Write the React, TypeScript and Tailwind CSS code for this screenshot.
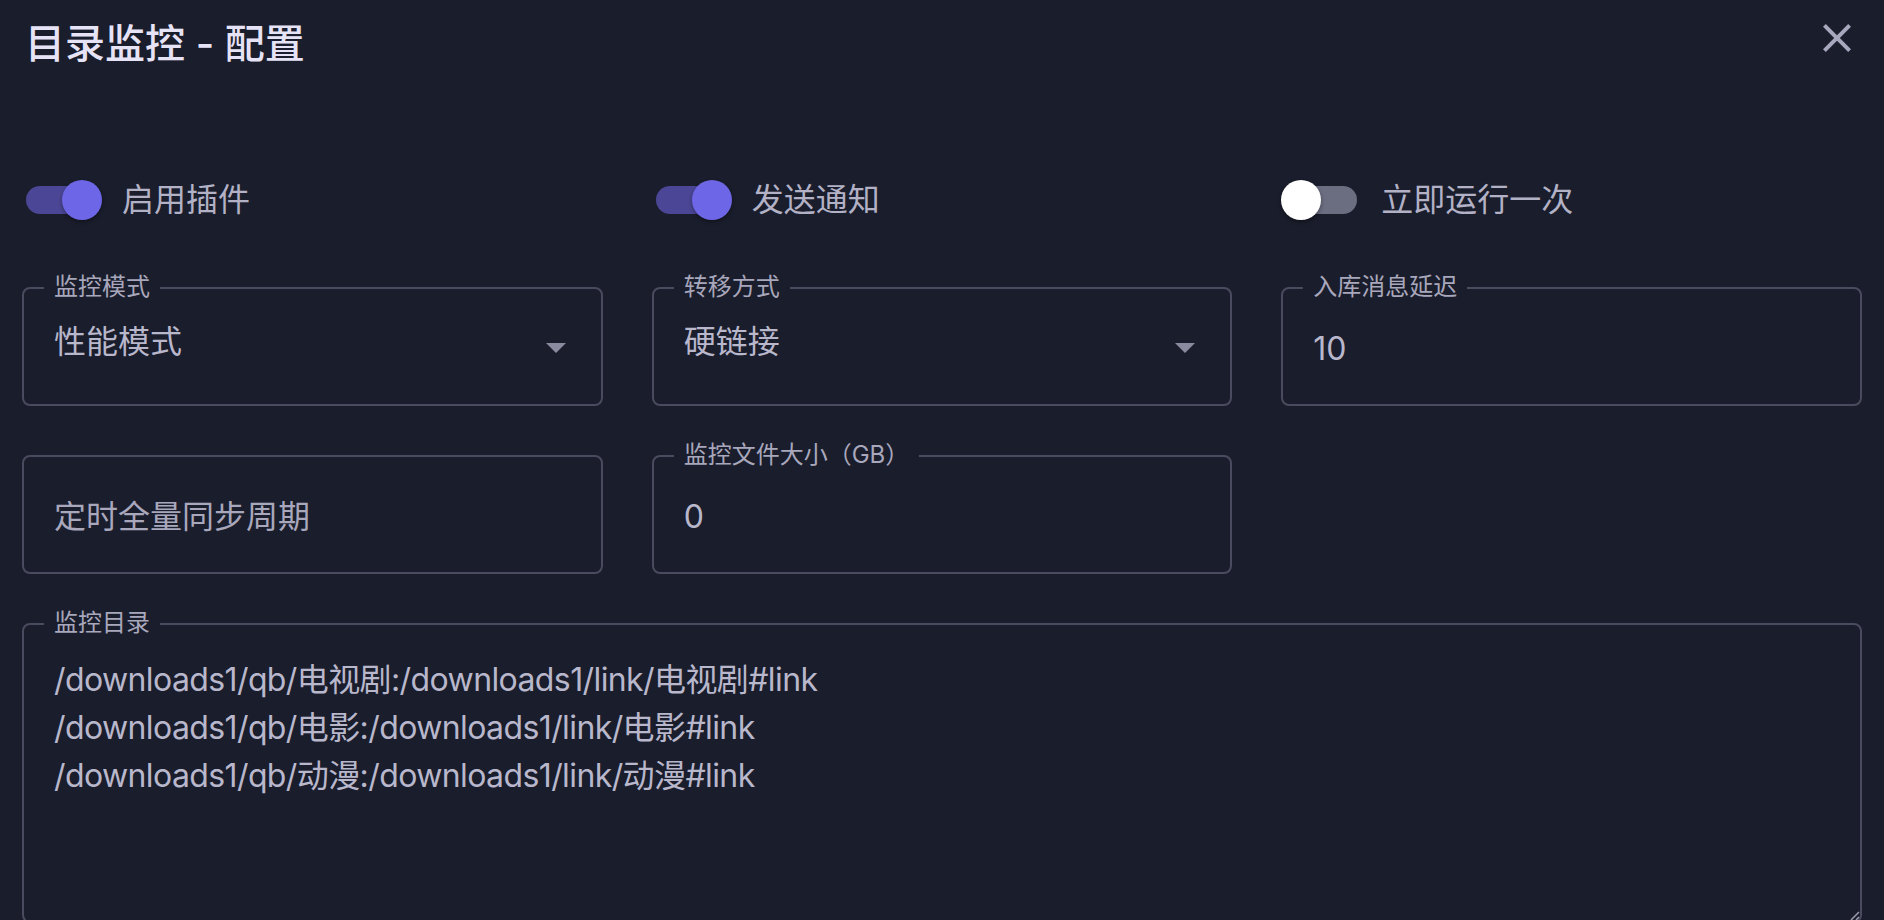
import React from 'react';

const PAGE_BG = 'bg-[#1a1d2b]';

function Toggle({ label, on }: { label: string; on: boolean }) {
  return (
    <div className="flex items-center gap-5">
      <div className="relative w-[80px] h-[40px] shrink-0">
        <div
          className={
            on
              ? 'absolute left-[4px] top-[6px] w-[72px] h-[28px] rounded-full bg-[#4b4796]'
              : 'absolute left-[4px] top-[6px] w-[72px] h-[28px] rounded-full bg-[#6b6d80]'
          }
        />
        <div
          className={
            on
              ? 'absolute top-0 left-[40px] w-[40px] h-[40px] rounded-full bg-[#6d66e6] shadow-[0_2px_4px_rgba(0,0,0,0.35)]'
              : 'absolute top-0 left-0 w-[40px] h-[40px] rounded-full bg-white shadow-[0_2px_4px_rgba(0,0,0,0.35)]'
          }
        />
      </div>
      <span className="text-[32px] leading-[40px] text-[#b2b1c6]">{label}</span>
    </div>
  );
}

function FloatLabel({ text }: { text: string }) {
  return (
    <span className={`absolute left-[20px] -top-[14px] px-[10px] text-[24px] leading-[24px] text-[#a8a7bc] ${PAGE_BG}`}>
      {text}
    </span>
  );
}

function SelectField({ label, value }: { label: string; value: string }) {
  return (
    <div className="relative h-[119px] border-2 border-[#4a4b5e] rounded-[8px] flex items-center pl-[30px] pr-[21px]">
      <FloatLabel text={label} />
      <span className="flex-1 pb-[10px] text-[32px] leading-[40px] text-[#b8b7cb]">{value}</span>
      <svg width="48" height="48" viewBox="0 0 24 24" className="shrink-0">
        <path d="M7,10L12,15L17,10H7Z" fill="#8b8b9f" />
      </svg>
    </div>
  );
}

function TextField({ label, value, placeholder }: { label?: string; value?: string; placeholder?: string }) {
  return (
    <div className="relative h-[119px] border-2 border-[#4a4b5e] rounded-[8px] flex items-center pl-[30px] pr-[30px] pt-[5px]">
      {label && <FloatLabel text={label} />}
      {value !== undefined ? (
        <span className="text-[32px] leading-[40px] text-[#b8b7cb]">{value}</span>
      ) : (
        <span className="text-[32px] leading-[40px] text-[#a8a7bc]">{placeholder}</span>
      )}
    </div>
  );
}

const dirs = [
  '/downloads1/qb/电视剧:/downloads1/link/电视剧#link',
  '/downloads1/qb/电影:/downloads1/link/电影#link',
  '/downloads1/qb/动漫:/downloads1/link/动漫#link',
];

export default function App() {
  return (
    <div className={`h-screen w-full overflow-hidden ${PAGE_BG} font-['Inter','Noto_Sans_CJK_SC',sans-serif]`}>
      <div className="flex items-start justify-between pl-[25px] pr-[23px]">
        <h1 className="pt-[20px] text-[40px] leading-[48px] font-medium text-[#e7e3f7]">目录监控 - 配置</h1>
        <button className="mt-[14px] w-[48px] h-[48px] flex items-center justify-center">
          <svg width="48" height="48" viewBox="0 0 24 24">
            <path
              d="M19,6.41L17.59,5L12,10.59L6.41,5L5,6.41L10.59,12L5,17.59L6.41,19L12,13.41L17.59,19L19,17.59L13.41,12L19,6.41Z"
              fill="#a7a7bd"
            />
          </svg>
        </button>
      </div>

      <div className="px-[22px]">
        <div className="mt-[112px] grid grid-cols-3 gap-x-[49px]">
          <Toggle label="启用插件" on />
          <Toggle label="发送通知" on />
          <Toggle label="立即运行一次" on={false} />
        </div>

        <div className="mt-[67px] grid grid-cols-3 gap-x-[49px] gap-y-[49px]">
          <SelectField label="监控模式" value="性能模式" />
          <SelectField label="转移方式" value="硬链接" />
          <TextField label="入库消息延迟" value="10" />

          <TextField placeholder="定时全量同步周期" />
          <TextField label="监控文件大小（GB）" value="0" />
          <div />

          <div className="col-span-3 relative h-[300px] border-2 border-[#4a4b5e] rounded-[8px] pl-[30px] pr-[30px] pt-[31px]">
            <FloatLabel text="监控目录" />
            <textarea
              readOnly
              rows={5}
              defaultValue={dirs.join('\n')}
              className="w-full h-[230px] resize-none bg-transparent outline-none text-[32px] leading-[48px] tracking-[-0.6px] text-[#b8b7cb]"
            />
            <svg width="12" height="12" viewBox="0 0 12 12" className="absolute right-0 bottom-0">
              <path d="M11 3L3 11M11 8L8 11" stroke="#9c9cb0" strokeWidth="1.5" />
            </svg>
          </div>
        </div>
      </div>
    </div>
  );
}
